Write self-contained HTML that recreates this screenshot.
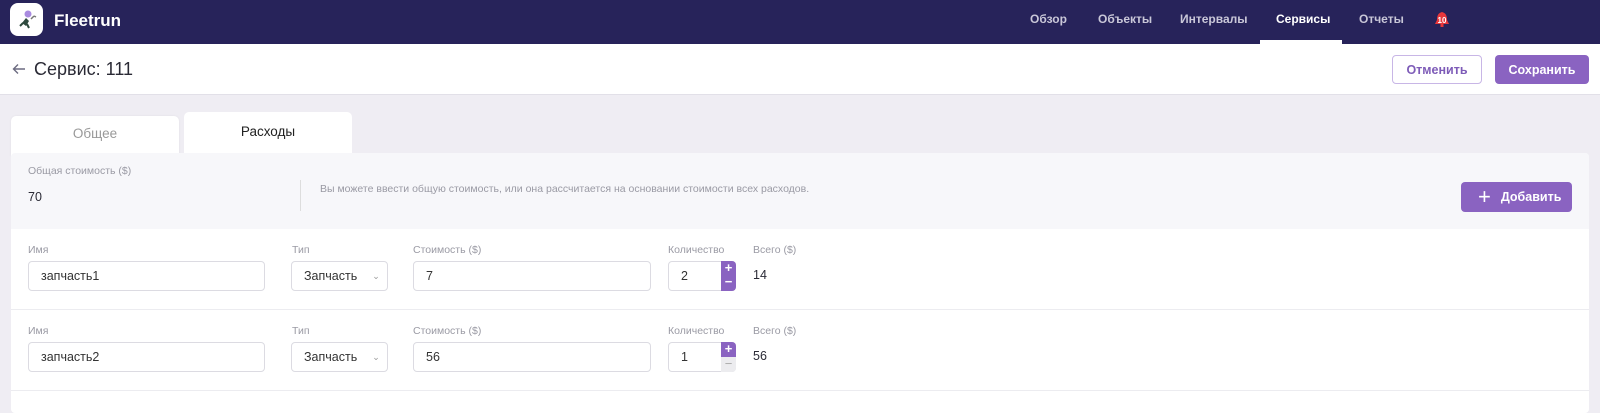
<!DOCTYPE html>
<html><head><meta charset="utf-8"><style>
*{box-sizing:border-box;margin:0;padding:0}
body{width:1600px;height:400px;overflow:hidden;background:#efedf3;font-family:"Liberation Sans",sans-serif;color:#2a2a35;position:relative}
.a{position:absolute}
.nav{left:0;top:0;width:1600px;height:44px;background:#27235a}
.nl{top:12px;font-size:12px;color:#c9c7d8;font-weight:bold}
.hdr{left:0;top:44px;width:1600px;height:51px;background:#fff;border-bottom:1px solid #e2e0e8}
.btn{height:29px;border-radius:4px;font-size:12.5px;font-weight:bold;display:flex;align-items:center;justify-content:center}
.lbl{font-size:10.5px;color:#9a9aa4}
.in{height:30px;border:1px solid #dcdbe2;border-radius:4px;background:#fff;font-size:12.5px;display:flex;align-items:center;padding-left:12px;color:#333}
</style></head><body>
<div class="a nav"></div>
<div class="a" style="left:10px;top:3px;width:33px;height:33px;background:#fff;border-radius:8px"></div>
<svg class="a" style="left:14px;top:7px" width="25" height="25" viewBox="0 0 25 25"><circle cx="14" cy="7" r="3.5" fill="#a98be0"/><path d="M8 16 L12 11 L15 14 L12 19 Z" fill="#2e4a3e"/><path d="M9 16 L6 19 M13 17 L15 21" stroke="#2e4a3e" stroke-width="2"/><path d="M17 12 l3 -3 m0 0 l2 1" stroke="#777" stroke-width="1.5"/></svg>
<div class="a" style="left:54px;top:11px;font-size:17px;font-weight:bold;color:#fff">Fleetrun</div>
<div class="a nl" style="left:1030px">Обзор</div>
<div class="a nl" style="left:1098px">Объекты</div>
<div class="a nl" style="left:1180px">Интервалы</div>
<div class="a nl" style="left:1276px;color:#fff">Сервисы</div>
<div class="a nl" style="left:1359px">Отчеты</div>
<div class="a" style="left:1260px;top:40px;width:82px;height:4px;background:#fff"></div>
<svg class="a" style="left:1434px;top:11px" width="16" height="17" viewBox="0 0 16 17"><path d="M8 1 C4 2 3 5 3 9 L1 13 L15 13 L13 9 C13 5 12 2 8 1Z" fill="#e8373b"/><rect x="6.5" y="13" width="3" height="3" fill="#e8373b"/><text x="8" y="12" font-size="8" font-weight="bold" fill="#fff" text-anchor="middle" font-family="Liberation Sans">10</text></svg>
<div class="a hdr"></div>
<svg class="a" style="left:12px;top:63px" width="14" height="12" viewBox="0 0 14 12"><path d="M13 6H1.5M6 1.5L1.5 6L6 10.5" stroke="#6b6a80" stroke-width="1.4" fill="none"/></svg>
<div class="a" style="left:34px;top:59px;font-size:18px;color:#2a2a35">Сервис: 111</div>
<div class="a btn" style="left:1392px;top:55px;width:90px;border:1px solid #c8b6e6;color:#7e5cb8;background:#fff">Отменить</div>
<div class="a btn" style="left:1495px;top:55px;width:94px;background:#8a63c1;color:#fff">Сохранить</div>
<div class="a" style="left:11px;top:116px;width:168px;height:40px;background:#fff;border-radius:5px 5px 0 0;box-shadow:0 0 2px rgba(0,0,0,.06);font-size:13.5px;color:#999;text-align:center;padding-top:10px">Общее</div>
<div class="a" style="left:184px;top:112px;width:168px;height:44px;background:#fff;border-radius:5px 5px 0 0;font-size:13.5px;color:#222;text-align:center;padding-top:12px">Расходы</div>
<div class="a" style="left:11px;top:153px;width:1578px;height:260px;background:#fff;border-radius:4px"></div>
<div class="a" style="left:11px;top:153px;width:1578px;height:76px;background:#f7f7fa;border-radius:4px 4px 0 0"></div>
<div class="a lbl" style="left:28px;top:165px">Общая стоимость ($)</div>
<div class="a" style="left:28px;top:190px;font-size:12.5px">70</div>
<div class="a" style="left:300px;top:180px;width:1px;height:31px;background:#ddd"></div>
<div class="a" style="left:320px;top:183px;font-size:10.5px;color:#9a9aa4">Вы можете ввести общую стоимость, или она рассчитается на основании стоимости всех расходов.</div>
<div class="a btn" style="left:1461px;top:182px;width:111px;height:30px;background:#8a63c1;color:#fff;justify-content:flex-start;padding-left:17px"><span style="font-size:22px;font-weight:normal;margin-right:10px;line-height:1">+</span>Добавить</div>
<div class="a" style="left:11px;top:309px;width:1578px;height:1px;background:#ececf0"></div>
<div class="a" style="left:11px;top:390px;width:1578px;height:1px;background:#ececf0"></div>

<div class="a lbl" style="left:28px;top:244px">Имя</div>
<div class="a lbl" style="left:292px;top:244px">Тип</div>
<div class="a lbl" style="left:413px;top:244px">Стоимость ($)</div>
<div class="a lbl" style="left:668px;top:244px">Количество</div>
<div class="a lbl" style="left:753px;top:244px">Всего ($)</div>
<div class="a in" style="left:28px;top:261px;width:237px">запчасть1</div>
<div class="a in" style="left:291px;top:261px;width:97px">Запчасть<span style="margin-left:15px;font-size:9px;color:#999">&#8964;</span></div>
<div class="a in" style="left:413px;top:261px;width:238px">7</div>
<div class="a in" style="left:668px;top:261px;width:68px">2</div>
<div class="a" style="left:721px;top:261px;width:15px;height:30px;background:#8a63c1;border-radius:0 4px 4px 0;color:#fff;font-size:13px;font-weight:bold;text-align:center;line-height:14px">+<br>−</div>
<div class="a" style="left:753px;top:268px;font-size:12.5px">14</div>

<div class="a lbl" style="left:28px;top:325px">Имя</div>
<div class="a lbl" style="left:292px;top:325px">Тип</div>
<div class="a lbl" style="left:413px;top:325px">Стоимость ($)</div>
<div class="a lbl" style="left:668px;top:325px">Количество</div>
<div class="a lbl" style="left:753px;top:325px">Всего ($)</div>
<div class="a in" style="left:28px;top:342px;width:237px">запчасть2</div>
<div class="a in" style="left:291px;top:342px;width:97px">Запчасть<span style="margin-left:15px;font-size:9px;color:#999">&#8964;</span></div>
<div class="a in" style="left:413px;top:342px;width:238px">56</div>
<div class="a in" style="left:668px;top:342px;width:68px">1</div>
<div class="a" style="left:721px;top:342px;width:15px;height:15px;background:#8a63c1;border-radius:0 4px 0 0;color:#fff;font-size:13px;font-weight:bold;text-align:center;line-height:14px">+</div>
<div class="a" style="left:721px;top:357px;width:15px;height:15px;background:#ececef;border-radius:0 0 4px 0;color:#aaa;font-size:13px;text-align:center;line-height:14px">−</div>
<div class="a" style="left:753px;top:349px;font-size:12.5px">56</div>
</body></html>
